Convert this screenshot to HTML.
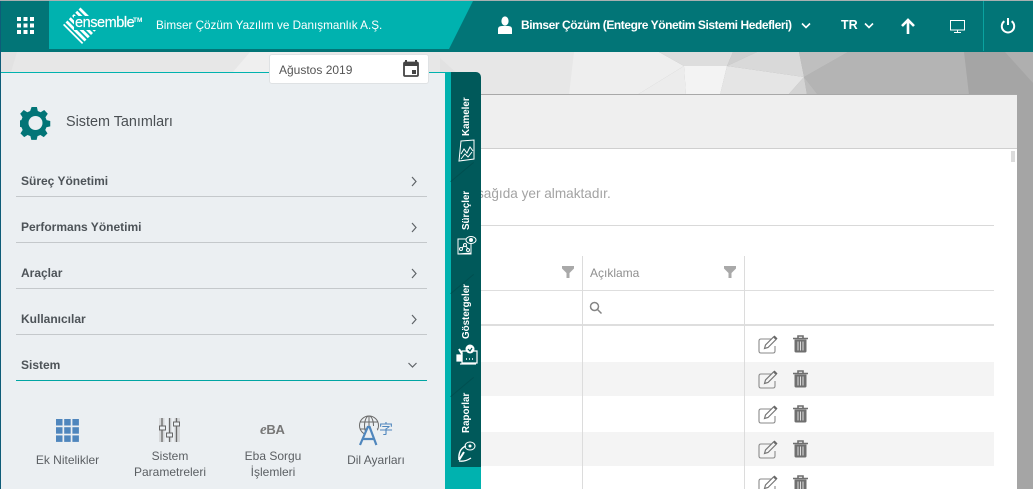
<!DOCTYPE html>
<html><head><meta charset="utf-8"><style>
*{box-sizing:border-box}
html,body{margin:0;padding:0}
body{width:1033px;height:489px;overflow:hidden;position:relative;background:#fff;font-family:"Liberation Sans","DejaVu Sans",sans-serif}
.a{position:absolute}
.t{position:absolute;white-space:nowrap}
.mi{position:absolute;left:21px;font-size:12px;font-weight:bold;color:#4d5358;white-space:nowrap}
.ml{position:absolute;left:16px;width:411px;height:1px;background:#c4c8cb}
.tab{position:absolute;color:#fff;font-size:9.8px;font-weight:bold;white-space:nowrap;transform:rotate(-90deg);transform-origin:left top;left:461px}
.lb{position:absolute;font-size:12px;color:#5b5f63;text-align:center;line-height:17px}
</style></head><body>
<!-- background: coordinates are page coordinates -->
<svg class="a" style="left:0;top:0" width="1033" height="489">
<rect y="52" width="1033" height="437" fill="#a5a5a5"/>
<rect y="52" width="574" height="43" fill="#e7e7e7"/>
<polygon points="0,52 17,52 11,72 0,72" fill="#e2e2e2"/>
<polygon points="250,52 300,52 300,72 233,72" fill="#efefef"/>
<polygon points="440,58 481,95 440,95" fill="#e2e2e2"/>
<polygon points="574,52 659,52 684,66 637,95 569,95" fill="#eeeeee"/>
<polygon points="659,52 733,52 727,66 684,66" fill="#dddddd"/>
<polygon points="684,66 686,95 637,95" fill="#ececec"/>
<polygon points="684,66 727,66 720,95 686,95" fill="#f3f3f3"/>
<polygon points="727,66 804,77 788,95 720,95" fill="#e5e5e5"/>
<polygon points="733,52 757,52 727,66" fill="#cfcfcf"/>
<polygon points="757,52 799,52 804,77 727,66" fill="#d9d9d9"/>
<polygon points="804,77 807,95 788,95" fill="#d3d3d3"/>
<polygon points="799,52 848,52 804,77" fill="#bfbfbf"/>
<polygon points="804,77 818,95 807,95" fill="#bdbdbd"/>
<polygon points="848,52 964,52 969,95 818,95 804,77" fill="#b4b4b4"/>
<polygon points="1005,52 1033,52 1033,83" fill="#afafaf"/>
</svg>
<!-- header -->
<div class="a" style="left:0;top:0;width:1033px;height:1px;background:#a9b0b1"></div>
<div class="a" style="left:0;top:1px;width:1033px;height:51px;background:#027577"></div>
<div class="a" style="left:0;top:1px;width:1px;height:488px;background:#0e5c78"></div>
<svg class="a" style="left:49px;top:1px" width="425" height="48"><polygon points="0,0 424,0 400,48 0,48" fill="#00b2af"/></svg>
<svg class="a" style="left:17px;top:17px" width="17" height="17" fill="#fff">
<rect width="4" height="4"/><rect x="6.500" width="4" height="4"/><rect x="13" width="4" height="4"/>
<rect y="6.500" width="4" height="4"/><rect x="6.500" y="6.500" width="4" height="4"/><rect x="13" y="6.500" width="4" height="4"/>
<rect y="13" width="4" height="4"/><rect x="6.500" y="13" width="4" height="4"/><rect x="13" y="13" width="4" height="4"/></svg>
<!-- logo -->
<svg class="a" style="left:60px;top:3px" width="44" height="44">
<defs><clipPath id="dm"><polygon points="22,3 41,22 22,41 3,22"/></clipPath></defs>
<g clip-path="url(#dm)" stroke="#fff" stroke-width="2.800">
<path d="M-10 -24L50 36M-10 -17.500L50 42.500M-10 -11L50 49M-10 -4.500L50 55.500M-10 2L50 62M-10 8.500L50 68.500"/>
</g>
<polygon points="14,13 44,13 44,27 14,27" fill="#00b2af"/>
</svg>
<div class="t" style="left:75px;top:15px;font-size:14.500px;color:#fff;letter-spacing:-.45px;line-height:17px;-webkit-text-stroke:.2px #fff">ensemble</div>
<div class="t" style="left:133px;top:17px;font-size:6.500px;color:#fff;font-weight:bold">TM</div>
<div class="t" style="left:156px;top:19px;font-size:11.700px;color:#fff">Bimser Çözüm Yazılım ve Danışmanlık A.Ş.</div>
<svg class="a" style="left:497px;top:16px" width="16" height="18" fill="#fff"><ellipse cx="8" cy="5" rx="3.600" ry="4.600"/><path d="M1 18 L1 13 Q1 10 5 10 L11 10 Q15 10 15 13 L15 18Z"/></svg>
<div class="t" style="left:521px;top:18px;font-size:12px;color:#fff;font-weight:bold;letter-spacing:-.43px">Bimser Çözüm (Entegre Yönetim Sistemi Hedefleri)</div>
<svg class="a" style="left:801px;top:22px" width="10" height="8" fill="none" stroke="#fff" stroke-width="1.600"><path d="M1 1.500l4 4 4-4"/></svg>
<div class="t" style="left:841px;top:18px;font-size:12.500px;color:#fff;font-weight:bold">TR</div>
<svg class="a" style="left:864px;top:22px" width="10" height="8" fill="none" stroke="#fff" stroke-width="1.600"><path d="M1 1.500l4 4 4-4"/></svg>
<svg class="a" style="left:900px;top:18px" width="16" height="16" fill="none" stroke="#fff" stroke-width="2.600"><path d="M8 16V2M2 8l6-6 6 6"/></svg>
<svg class="a" style="left:950px;top:20px" width="16" height="13" fill="none" stroke="#fff" stroke-width="1"><rect x=".5" y=".5" width="14" height="9.500"/><path d="M4 12.500h7M7.500 10v2"/></svg>
<div class="a" style="left:983px;top:1px;width:1px;height:50px;background:#0aa3a0"></div>
<svg class="a" style="left:1000px;top:17px" width="16" height="17" fill="none" stroke="#fff" stroke-width="2"><path d="M8 1v7M4.400 4.200a6.200 6.200 0 1 0 7.200 0"/></svg>
<!-- main card -->
<div class="a" style="left:470px;top:94px;width:547px;height:395px;background:#fff;border-top:1px solid #a8a8a8"></div>
<div class="a" style="left:470px;top:95px;width:547px;height:54px;background:#efefef;border-bottom:1px solid #cfcfcf"></div>
<div class="a" style="left:1011px;top:151px;width:4px;height:11px;background:#dcdcdc"></div>
<div class="t" style="left:477px;top:186px;font-size:13.600px;color:#a3a3a3">sağıda yer almaktadır.</div>
<div class="a" style="left:481px;top:225px;width:513px;height:1px;background:#d9d9d9"></div>
<!-- table -->
<div class="a" style="left:481px;top:362px;width:513px;height:34px;background:#f4f4f4"></div>
<div class="a" style="left:481px;top:432px;width:513px;height:34px;background:#f4f4f4"></div>
<div class="a" style="left:481px;top:290px;width:513px;height:1px;background:#dedede"></div>
<div class="a" style="left:481px;top:324px;width:513px;height:2px;background:#dedede"></div>
<div class="a" style="left:582px;top:256px;width:1px;height:233px;background:#dcdcdc"></div>
<div class="a" style="left:744px;top:256px;width:1px;height:233px;background:#dcdcdc"></div>
<div class="t" style="left:590px;top:266px;font-size:12px;color:#8f8f8f">Açıklama</div>
<svg class="a" style="left:561px;top:266px" width="14" height="12" fill="#a9a9a9"><path d="M1 0h12v2.500L8.500 7v5h-3V7L1 2.500z"/></svg>
<svg class="a" style="left:723px;top:266px" width="14" height="12" fill="#a9a9a9"><path d="M1 0h12v2.500L8.500 7v5h-3V7L1 2.500z"/></svg>
<svg class="a" style="left:589px;top:301px" width="14" height="14" fill="none" stroke="#858585" stroke-width="1.500"><circle cx="5.500" cy="5.500" r="4"/><path d="M8.500 8.500l4 4"/></svg>
<!-- action icons -->
<svg width="0" height="0" style="position:absolute"><defs>
<g id="ed"><path d="M14 4H3Q1 4 1 6v10q0 2 2 2h12q2 0 2-2v-5" fill="none" stroke="#8a8a8a" stroke-width="1.100"/><path d="M6.500 13.500l1-3.500 8-8 2.500 2.500-8 8z" fill="none" stroke="#777" stroke-width="1.200"/><path d="M16 1l3 3" stroke="#666" stroke-width="1.500"/></g>
<g id="tr"><path d="M0 3.500h15M5 3.500V1h5v2.500" fill="none" stroke="#6f6f6f" stroke-width="1.600"/><path d="M1.500 4.500h12v11.500q0 1.500-1.500 1.500H3q-1.500 0-1.500-1.500z" fill="#6f6f6f"/><path d="M5 6.500v9M7.500 6.500v9M10 6.500v9" stroke="#ddd" stroke-width="1"/></g>
</defs></svg>
<svg class="a" style="left:758px;top:335px" width="60" height="154"><use href="#ed" y="0"/><use href="#tr" x="35" y="0"/><use href="#ed" y="35"/><use href="#tr" x="35" y="35"/><use href="#ed" y="70"/><use href="#tr" x="35" y="70"/><use href="#ed" y="105"/><use href="#tr" x="35" y="105"/><use href="#ed" y="140"/><use href="#tr" x="35" y="140"/></svg>
<!-- side panel -->
<div class="a" style="left:1px;top:72px;width:444px;height:417px;background:#ebeff2;border-top:1px solid #00b2af"></div>
<div class="a" style="left:445px;top:72px;width:30px;height:417px;background:#00b2af"></div>
<div class="a" style="left:445px;top:467px;width:36px;height:22px;background:#00b2af"></div>
<div class="a" style="left:451px;top:72px;width:30px;height:395px;background:#00595a;border-radius:0 5px 0 0"></div>
<div class="a" style="left:451px;top:181px;height:1px;background:#004f50;transform:rotate(-40deg);transform-origin:left bottom;width:30px"></div>
<div class="a" style="left:451px;top:293px;height:1px;background:#004f50;transform:rotate(-40deg);transform-origin:left bottom;width:30px"></div>
<div class="a" style="left:451px;top:396px;height:1px;background:#004f50;transform:rotate(-40deg);transform-origin:left bottom;width:30px"></div>
<!-- date box -->
<div class="a" style="left:269px;top:54px;width:160px;height:30px;background:#fff;border:1px solid #dfe2e4;border-radius:3px"></div>
<div class="t" style="left:279px;top:63px;font-size:12px;color:#555">Ağustos 2019</div>
<svg class="a" style="left:403px;top:60px" width="17" height="18"><path d="M3 0v3M13 0v3" stroke="#444" stroke-width="2"/><rect x="1" y="2.500" width="14" height="13.500" rx="1" fill="none" stroke="#444" stroke-width="1.800"/><rect x="1" y="2.500" width="14" height="3.500" fill="#444"/><rect x="9" y="10" width="4" height="4" fill="#444"/></svg>
<!-- panel title -->
<svg class="a" style="left:20px;top:107px" width="32" height="33" viewBox="0 0 32 33"><path fill="#027577" fill-rule="evenodd" d="M13 0h6l1 4.500 3.200 1.400 4-2.500 4 4.200-2.600 3.900 1.300 3.200 4.100 1v6l-4.300 1-1.300 3.200 2.500 3.800-4.200 4.200-3.800-2.500-3.200 1.300-1 4.300h-6l-1-4.300-3.200-1.300-3.800 2.500-4.200-4.200 2.500-3.800-1.300-3.200-4.300-1v-6l4.100-1 1.300-3.200-2.600-3.900 4-4.200 4 2.500 3.200-1.400z" transform="scale(.89)"/><circle cx="15.500" cy="16" r="7" fill="#ebeff2"/></svg>
<div class="t" style="left:66px;top:114px;font-size:14.400px;color:#4a4f53">Sistem Tanımları</div>
<!-- menu -->
<div class="mi" style="top:174px">Süreç Yönetimi</div><div class="ml" style="top:196px"></div>
<div class="mi" style="top:220px">Performans Yönetimi</div><div class="ml" style="top:242px"></div>
<div class="mi" style="top:266px">Araçlar</div><div class="ml" style="top:288px"></div>
<div class="mi" style="top:312px">Kullanıcılar</div><div class="ml" style="top:334px"></div>
<div class="mi" style="top:358px">Sistem</div><div class="ml" style="top:380px;background:#00a5a3"></div>
<svg class="a" style="left:410px;top:176px" width="8" height="150" fill="none" stroke="#5f6468" stroke-width="1.200"><path d="M2 1l4 4.500-4 4.500M2 47l4 4.500-4 4.500M2 93l4 4.500-4 4.500M2 139l4 4.500-4 4.500"/></svg>
<svg class="a" style="left:407px;top:361px" width="11" height="8" fill="none" stroke="#5f6468" stroke-width="1.200"><path d="M1.500 2l4 4 4-4"/></svg>
<!-- icons -->
<svg class="a" style="left:56px;top:419px" width="23" height="23" fill="#4f86bd">
<rect width="6.500" height="6.500"/><rect x="8.200" width="6.500" height="6.500"/><rect x="16.400" width="6.500" height="6.500"/>
<rect y="8.200" width="6.500" height="6.500"/><rect x="8.200" y="8.200" width="6.500" height="6.500"/><rect x="16.400" y="8.200" width="6.500" height="6.500"/>
<rect y="16.400" width="6.500" height="6.500"/><rect x="8.200" y="16.400" width="6.500" height="6.500"/><rect x="16.400" y="16.400" width="6.500" height="6.500"/></svg>
<svg class="a" style="left:159px;top:418px" width="21" height="24"><rect x="0" width="21" height="24" fill="#d5d7d9"/><rect x="5.500" width="4.500" height="24" fill="#ebeff2"/><rect x="12.500" width="3" height="24" fill="#ebeff2"/><path d="M3 0v24M10.500 0v24M17.500 0v24" stroke="#6a6a6a" stroke-width="1.300"/><rect x="0.500" y="8" width="6" height="4" fill="#ebeff2" stroke="#666"/><rect x="7.500" y="15" width="6" height="4" fill="#ebeff2" stroke="#666"/><rect x="14.500" y="4" width="6" height="4" fill="#ebeff2" stroke="#666"/></svg>
<div class="t" style="left:260px;top:422px;font-size:13px;font-weight:bold;color:#777;letter-spacing:-.3px"><i style="font-family:'Liberation Serif',serif;font-size:15px">e</i>BA</div>
<svg class="a" style="left:358px;top:414px" width="36" height="32"><g fill="none" stroke="#6b6b6b" stroke-width="1"><circle cx="11" cy="11.500" r="9.500"/><ellipse cx="11" cy="11.500" rx="4.500" ry="9.500"/><path d="M11 2v19M2 8h18M2 15h18"/></g><polygon points="10,12 18,12 24,31 1,31" fill="#ebeff2"/><path d="M2 31L9.800 13h1.800l6.800 18M5 25h11" fill="none" stroke="#4f86bd" stroke-width="2.200"/><text x="21" y="20" font-size="14" fill="#4f86bd" font-family="'Noto Sans CJK JP',sans-serif">字</text></svg>
<div class="lb" style="left:20px;top:452px;width:95px">Ek Nitelikler</div>
<div class="lb" style="left:120px;top:448px;width:100px;line-height:16px">Sistem<br>Parametreleri</div>
<div class="lb" style="left:223px;top:448px;width:100px;line-height:16px">Eba Sorgu<br>İşlemleri</div>
<div class="lb" style="left:326px;top:452px;width:100px">Dil Ayarları</div>
<!-- tabs -->
<div class="tab" style="top:136px">Kameler</div>
<div class="tab" style="top:230px">Süreçler</div>
<div class="tab" style="top:339px">Göstergeler</div>
<div class="tab" style="top:433px">Raporlar</div>
<svg class="a" style="left:457px;top:139px" width="20" height="24" fill="none" stroke="#fff" stroke-width="1"><path d="M4 2l13-1v19L2 22z"/><path d="M4 15l3-5 3 4 3-6 3 4M4 20l4-5 3 3 4-5"/></svg>
<svg class="a" style="left:456px;top:233px" width="22" height="24" fill="none" stroke="#fff" stroke-width="1"><path d="M2 6h13v15H2zM2 21l13-1"/><circle cx="5" cy="16" r="1.500"/><circle cx="9" cy="12" r="1.500"/><circle cx="12" cy="17" r="1.500"/><path d="M6 15l2-2M10 13l2 3"/><ellipse cx="15" cy="7" rx="5" ry="3.500" fill="#00595a"/><circle cx="15" cy="7" r="1.500" fill="#fff"/></svg>
<svg class="a" style="left:456px;top:343px" width="22" height="24" fill="none" stroke="#fff" stroke-width="1.200"><path d="M6 8h15v12H6z"/><path d="M4 21h16"/><path d="M10 16h1M13 16h1M16 16h1" stroke-width="1.600"/><rect x="1" y="12" width="5" height="6" fill="#fff"/><path d="M3 6l3 5" stroke-width="2"/><circle cx="14" cy="6" r="4.500" fill="#fff" stroke="none"/><path d="M12 6l2 2 2-3" stroke="#00595a"/></svg>
<svg class="a" style="left:457px;top:437px" width="20" height="26" fill="none" stroke="#fff"><path d="M2 23Q1 12 9 9" stroke-width="1.400"/><path d="M2 23l5-8" stroke-width="2"/><path d="M2 24q6 1 12-3" stroke-width="1.300"/><ellipse cx="13" cy="9" rx="5" ry="4" stroke-width="1"/><circle cx="13" cy="9" r="1.500" fill="#fff" stroke="none"/></svg>
</body></html>
